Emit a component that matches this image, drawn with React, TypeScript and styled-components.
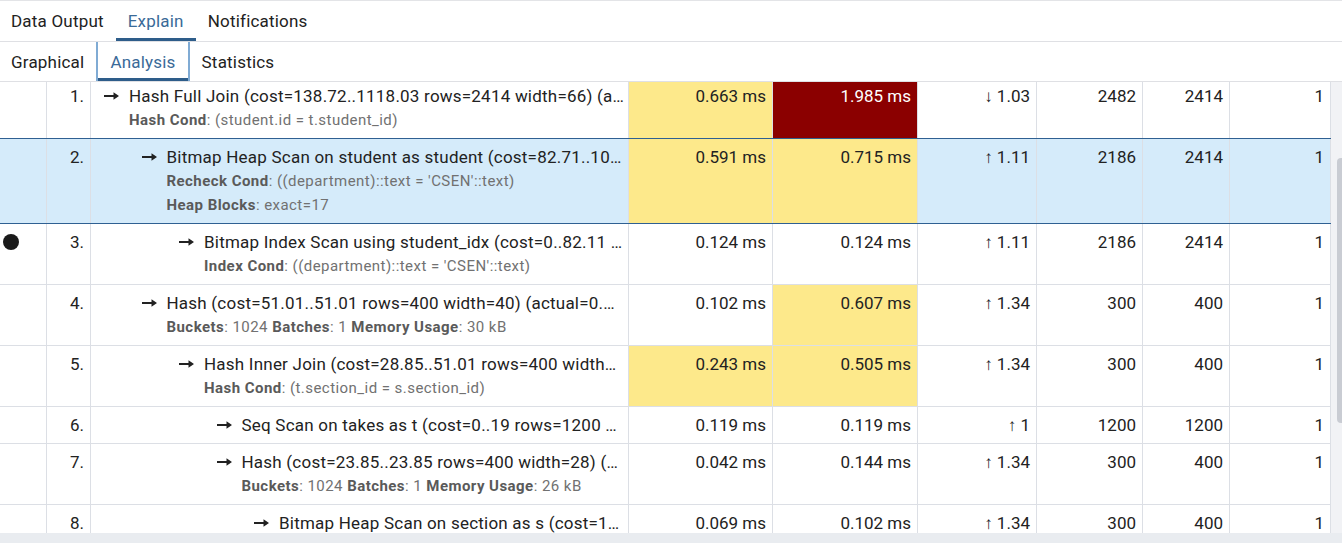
import React, { useLayoutEffect, useRef } from "react";
import styled, { createGlobalStyle } from "styled-components";

const GlobalStyle = createGlobalStyle`
  html, body { margin: 0; padding: 0; background: #ffffff; }
  body { font-family: Roboto, "Liberation Sans", Arial, sans-serif; }
  *, *::before, *::after { box-sizing: border-box; }
`;

const Page = styled.div`
  width: 1342px;
  height: 557px;
  display: flex;
  flex-direction: column;
  border-top: 1px solid #e3e4e7;
  overflow: hidden;
  background: #fff;
`;

const TabBar = styled.div<{ $h: number }>`
  display: flex;
  height: ${(p) => p.$h}px;
  flex-shrink: 0;
  border-bottom: 1px solid #dfe0e4;
`;

const Tab = styled.div<{ $active?: boolean; $focus?: boolean }>`
  display: flex;
  align-items: center;
  padding: 3px 12px 3px;
  font-size: 17px;
  letter-spacing: 0.2px;
  color: ${(p) => (p.$active ? "#3a6a98" : "#222222")};
  box-shadow: ${(p) => (p.$active ? "inset 0 -3px 0 #2e5d8a" : "none")};
  border-left: ${(p) => (p.$focus ? "2px solid #80abd4" : "0")};
  border-right: ${(p) => (p.$focus ? "2px solid #80abd4" : "0")};
  white-space: nowrap;
  cursor: pointer;

  &:first-child {
    padding-left: 11px;
  }
`;

const Body = styled.div`
  display: flex;
  flex: 1;
  min-height: 0;
`;

const Viewport = styled.div`
  flex: 1;
  overflow: hidden;
`;

const VScroll = styled.div`
  width: 11px;
  flex-shrink: 0;
  background: #f1f2f5;
  display: flex;
  justify-content: flex-end;
  align-items: flex-start;
`;

const VThumb = styled.div`
  margin-top: 76px;
  width: 5px;
  height: 265px;
  background: #c9ccd3;
  border-radius: 4px 0 0 4px;
`;

const HScroll = styled.div`
  height: 10px;
  flex-shrink: 0;
  background: #e9ecf0;
`;

const Footer = styled.div`
  height: 14px;
  flex-shrink: 0;
  background: #fff;
`;

const Row = styled.div<{ $selected?: boolean; $blueTop?: boolean }>`
  display: grid;
  grid-template-columns: 47px 44px 538px 144px 145px 119px 106px 87px 101px;
  border-top: 1px solid ${(p) => (p.$blueTop ? "#2f6092" : "#dcdfe5")};
  background: ${(p) => (p.$selected ? "#d5ebfa" : "#ffffff")};
`;

type Tone = "none" | "warn" | "bad";

const Cell = styled.div<{ $tone?: Tone; $align?: "left" | "right" }>`
  border-right: 1px solid #dcdfe5;
  padding: 6px 6px;
  font-size: 17px;
  line-height: 24px;
  color: ${(p) => (p.$tone === "bad" ? "#ffffff" : "#222222")};
  text-align: ${(p) => p.$align || "right"};
  white-space: nowrap;
  overflow: hidden;
  background: ${(p) =>
    p.$tone === "warn" ? "#fde98b" : p.$tone === "bad" ? "#8b0000" : "transparent"};
`;

const BulletCell = styled(Cell)`
  padding-left: 3px;
`;

const Dot = styled.span`
  display: block;
  width: 16px;
  height: 16px;
  margin-top: 4px;
  border-radius: 50%;
  background: #1a1a1a;
`;

const NodeCell = styled(Cell)<{ $level: number }>`
  text-align: left;
  padding-left: ${(p) => 13 + (p.$level - 1) * 37.5}px;
  padding-right: 4px;
`;

const TitleLine = styled.div`
  display: flex;
  align-items: center;
  gap: 10px;
  min-width: 0;
`;

const TitleText = styled.span`
  flex: 1;
  min-width: 0;
  overflow: hidden;
  text-overflow: ellipsis;
  white-space: nowrap;
  letter-spacing: 0.22px;
  color: #222222;
`;

const Details = styled.div`
  margin-left: 25px;
`;

const DetailLine = styled.div`
  font-size: 15px;
  letter-spacing: 0.45px;
  line-height: 24px;
  color: #717171;
  overflow: hidden;
  text-overflow: ellipsis;
  white-space: nowrap;
`;

const Label = styled.b`
  font-weight: 700;
  color: #5a5a5a;
`;

const Arrow = () => (
  <svg width="15" height="8" viewBox="0 0 15 8" style={{ flexShrink: 0 }}>
    <path d="M0 3h9.5V0.3L15 4l-5.5 3.7V5H0z" fill="#222" />
  </svg>
);

type Detail = [string, string][];

interface PlanRow {
  n: number;
  level: number;
  bullet?: boolean;
  title: string;
  details: Detail[];
  excl: string;
  exclTone?: Tone;
  incl: string;
  inclTone?: Tone;
  est: string;
  actual: string;
  plan: string;
  loops: string;
}

const rows: PlanRow[] = [
  {
    n: 1, level: 1,
    title: "Hash Full Join (cost=138.72..1118.03 rows=2414 width=66) (actual=0.663..1.985 rows=2482 loops=1)",
    details: [[["Hash Cond", "(student.id = t.student_id)"]]],
    excl: "0.663 ms", exclTone: "warn", incl: "1.985 ms", inclTone: "bad",
    est: "↓ 1.03", actual: "2482", plan: "2414", loops: "1",
  },
  {
    n: 2, level: 2,
    title: "Bitmap Heap Scan on student as student (cost=82.71..1050.58 rows=2414 width=33) (actual=0.591..0.715 rows=2186 loops=1)",
    details: [
      [["Recheck Cond", "((department)::text = 'CSEN'::text)"]],
      [["Heap Blocks", "exact=17"]],
    ],
    excl: "0.591 ms", exclTone: "warn", incl: "0.715 ms", inclTone: "warn",
    est: "↑ 1.11", actual: "2186", plan: "2414", loops: "1",
  },
  {
    n: 3, level: 3, bullet: true,
    title: "Bitmap Index Scan using student_idx (cost=0..82.11 rows=2414 width=0) (actual=0.124..0.124 rows=2186 loops=1)",
    details: [[["Index Cond", "((department)::text = 'CSEN'::text)"]]],
    excl: "0.124 ms", incl: "0.124 ms",
    est: "↑ 1.11", actual: "2186", plan: "2414", loops: "1",
  },
  {
    n: 4, level: 2,
    title: "Hash (cost=51.01..51.01 rows=400 width=40) (actual=0.102..0.607 rows=300 loops=1)",
    details: [[["Buckets", "1024"], ["Batches", "1"], ["Memory Usage", "30 kB"]]],
    excl: "0.102 ms", incl: "0.607 ms", inclTone: "warn",
    est: "↑ 1.34", actual: "300", plan: "400", loops: "1",
  },
  {
    n: 5, level: 3,
    title: "Hash Inner Join (cost=28.85..51.01 rows=400 width=40) (actual=0.243..0.505 rows=300 loops=1)",
    details: [[["Hash Cond", "(t.section_id = s.section_id)"]]],
    excl: "0.243 ms", exclTone: "warn", incl: "0.505 ms", inclTone: "warn",
    est: "↑ 1.34", actual: "300", plan: "400", loops: "1",
  },
  {
    n: 6, level: 4,
    title: "Seq Scan on takes as t (cost=0..19 rows=1200 width=12) (actual=0.119..0.119 rows=1200 loops=1)",
    details: [],
    excl: "0.119 ms", incl: "0.119 ms",
    est: "↑ 1", actual: "1200", plan: "1200", loops: "1",
  },
  {
    n: 7, level: 4,
    title: "Hash (cost=23.85..23.85 rows=400 width=28) (actual=0.042..0.144 rows=300 loops=1)",
    details: [[["Buckets", "1024"], ["Batches", "1"], ["Memory Usage", "26 kB"]]],
    excl: "0.042 ms", incl: "0.144 ms",
    est: "↑ 1.34", actual: "300", plan: "400", loops: "1",
  },
  {
    n: 8, level: 5,
    title: "Bitmap Heap Scan on section as s (cost=18.1..23.85 rows=400 width=28) (actual=0.069..0.102 rows=300 loops=1)",
    details: [
      [["Recheck Cond", "((semester)::text = 'Winter'::text)"]],
      [["Heap Blocks", "exact=3"]],
    ],
    excl: "0.069 ms", incl: "0.102 ms",
    est: "↑ 1.34", actual: "300", plan: "400", loops: "1",
  },
];

const SELECTED = 2;

export default function App() {
  const viewRef = useRef<HTMLDivElement>(null);
  useLayoutEffect(() => {
    if (viewRef.current) viewRef.current.scrollTop = 5;
  }, []);

  return (
    <>
      <GlobalStyle />
      <Page>
        <TabBar $h={41}>
          <Tab>Data Output</Tab>
          <Tab $active>Explain</Tab>
          <Tab>Notifications</Tab>
        </TabBar>
        <TabBar $h={40}>
          <Tab>Graphical</Tab>
          <Tab $active $focus>Analysis</Tab>
          <Tab>Statistics</Tab>
        </TabBar>
        <Body>
          <Viewport ref={viewRef}>
            {rows.map((r) => (
              <Row
                key={r.n}
                $selected={r.n === SELECTED}
                $blueTop={r.n === SELECTED || r.n === SELECTED + 1}
              >
                <BulletCell $align="left">{r.bullet && <Dot />}</BulletCell>
                <Cell>{r.n}.</Cell>
                <NodeCell $level={r.level}>
                  <TitleLine>
                    <Arrow />
                    <TitleText>{r.title}</TitleText>
                  </TitleLine>
                  {r.details.length > 0 && (
                    <Details>
                      {r.details.map((line, i) => (
                        <DetailLine key={i}>
                          {line.map(([k, v], j) => (
                            <React.Fragment key={j}>
                              {j > 0 && " "}
                              <Label>{k}</Label>: {v}
                            </React.Fragment>
                          ))}
                        </DetailLine>
                      ))}
                    </Details>
                  )}
                </NodeCell>
                <Cell $tone={r.exclTone}>{r.excl}</Cell>
                <Cell $tone={r.inclTone}>{r.incl}</Cell>
                <Cell>{r.est}</Cell>
                <Cell>{r.actual}</Cell>
                <Cell>{r.plan}</Cell>
                <Cell>{r.loops}</Cell>
              </Row>
            ))}
          </Viewport>
          <VScroll>
            <VThumb />
          </VScroll>
        </Body>
        <HScroll />
        <Footer />
      </Page>
    </>
  );
}
